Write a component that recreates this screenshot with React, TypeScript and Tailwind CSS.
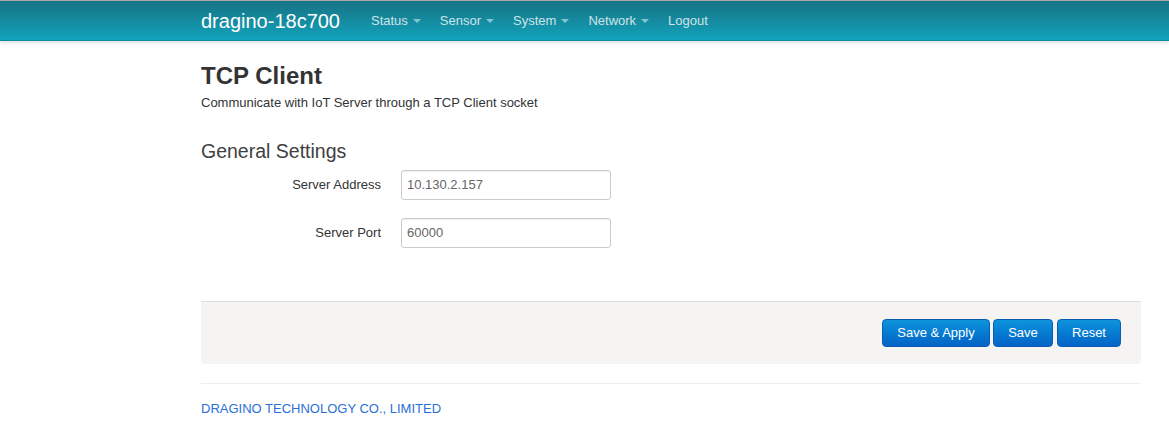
import React from "react";

const Caret = () => (
  <span className="ml-[5px] inline-block h-0 w-0 border-x-[4px] border-t-[4px] border-x-transparent border-t-[#9fd3dc] align-middle opacity-80" />
);

export default function App() {
  const nav = ["Status", "Sensor", "System", "Network"];
  return (
    <div className="min-h-[421px] bg-white font-['Liberation_Sans',Arial,sans-serif] text-[13px] text-[#333]">
      <div className="h-[41px] border-t border-t-[#a9a9a9] border-b border-b-[#0b8ba0] bg-gradient-to-b from-[#177384] to-[#0fa3bc] shadow-[0_2px_3px_rgba(0,0,0,0.12)]">
        <div className="ml-[201px] flex h-full w-[940px] items-center">
          <span className="mr-[31px] text-[20px] text-white">dragino-18c700</span>
          {nav.map((n) => (
            <span key={n} className="mr-[19px] flex items-center text-[13px] text-[#cfe3e7]">
              {n}
              <Caret />
            </span>
          ))}
          <span className="text-[13px] text-[#cfe3e7]">Logout</span>
        </div>
      </div>

      <div className="ml-[201px] w-[940px]">
        <h2 className="mt-[21px] text-[24px] font-bold leading-[28px] text-[#333]">TCP Client</h2>
        <p className="mt-[4px] text-[13px] leading-[18px]">Communicate with IoT Server through a TCP Client socket</p>

        <h3 className="mt-[27px] text-[19.5px] leading-[24px] text-[#404040]">General Settings</h3>

        <div className="mt-[7px] flex flex-col gap-[18px]">
          <div className="flex items-center">
            <label className="w-[180px] text-right text-[13px]">Server Address</label>
            <div className="ml-[20px] flex h-[30px] w-[210px] items-center rounded-[3px] border border-[#ccc] px-[5px] text-[13px] text-[#666] shadow-[inset_0_1px_1px_rgba(0,0,0,0.075)]">
              10.130.2.157
            </div>
          </div>
          <div className="flex items-center">
            <label className="w-[180px] text-right text-[13px]">Server Port</label>
            <div className="ml-[20px] flex h-[30px] w-[210px] items-center rounded-[3px] border border-[#ccc] px-[5px] text-[13px] text-[#666] shadow-[inset_0_1px_1px_rgba(0,0,0,0.075)]">
              60000
            </div>
          </div>
        </div>

        <div className="mt-[53px] flex h-[63px] items-center justify-end gap-[3px] rounded-b-[4px] border-t border-t-[#ddd] bg-[#f5f4f3] pr-[20px]">
          {["Save & Apply", "Save", "Reset"].map((b, i) => (
            <button
              key={b}
              className={`h-[28px] rounded-[4px] border border-[#0a5db3] bg-gradient-to-b from-[#0f94dc] to-[#0663c7] text-[13px] text-white ${
                i === 0 ? "w-[108px]" : i === 1 ? "w-[60px]" : "ml-[1px] w-[64px]"
              }`}
            >
              {b}
            </button>
          ))}
        </div>

        <div className="mt-[19px] border-t border-t-[#eee]" />
        <div className="mt-[16px] text-[13px] leading-[18px] text-[#2a6fd6]">DRAGINO TECHNOLOGY CO., LIMITED</div>
      </div>
    </div>
  );
}
